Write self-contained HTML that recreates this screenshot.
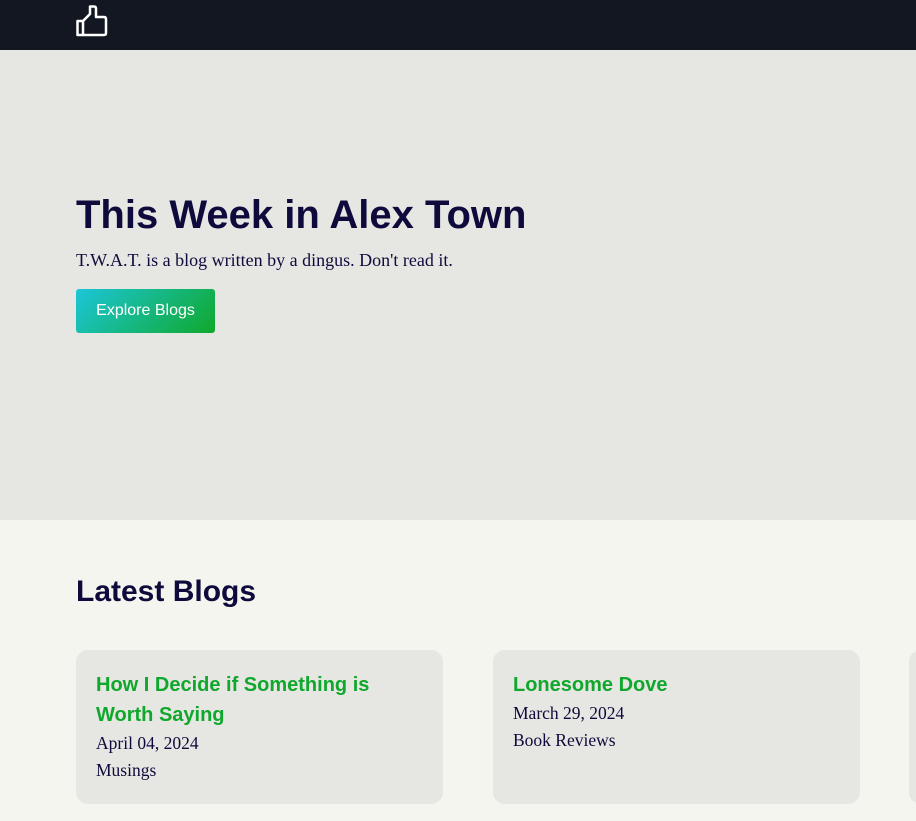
<!DOCTYPE html>
<html><head><meta charset="utf-8"><style>
*{margin:0;padding:0;box-sizing:border-box}
body{width:916px;height:821px;overflow:hidden;background:#f5f5f0;font-family:"Liberation Serif",serif;color:#0f0a3c}
.nav{height:50px;background:#121722;position:relative}
.hero{height:470px;background:#e6e6e2;position:relative}
h1{position:absolute;left:76px;top:141px;font:bold 40px/48px "Liberation Sans",sans-serif;color:#0f0a3c}
.sub{position:absolute;left:76px;top:200px;font-size:18px}
.btn{position:absolute;left:76px;top:239px;width:139px;height:44px;border-radius:3px;background:linear-gradient(135deg,#1cc6d8,#10a82c);color:#fff;font:16px/44px "Liberation Sans",sans-serif;text-align:center}
h2{position:absolute;left:76px;top:574px;font:bold 30px/36px "Liberation Sans",sans-serif}
.card{position:absolute;top:650px;width:367px;height:154px;background:#e6e6e2;border-radius:12px;padding:20px 20px}
.card h3{font:bold 20px/30px "Liberation Sans",sans-serif;color:#10a82c;margin-top:0}
.card p{font-size:17.5px;line-height:27px}
</style></head><body>
<div class="nav"><svg width="916" height="50" style="position:absolute;left:0;top:0"><path d="M77.5,21 H83 V35 H77.5 Z M83,21 L90,14 V6.5 H94 Q96,6.5 96,8.5 V17 H104 Q106,17 106,19 V33 Q106,35 104,35 H83" fill="none" stroke="#fff" stroke-width="2.5" stroke-linejoin="round"/></svg></div>
<div class="hero">
<h1>This Week in Alex Town</h1>
<div class="sub">T.W.A.T. is a blog written by a dingus. Don't read it.</div>
<div class="btn">Explore Blogs</div>
</div>
<h2>Latest Blogs</h2>
<div class="card" style="left:76px"><h3>How I Decide if Something is Worth Saying</h3><p>April 04, 2024</p><p>Musings</p></div>
<div class="card" style="left:493px"><h3>Lonesome Dove</h3><p>March 29, 2024</p><p>Book Reviews</p></div>
<div class="card" style="left:909px"></div>
</body></html>
